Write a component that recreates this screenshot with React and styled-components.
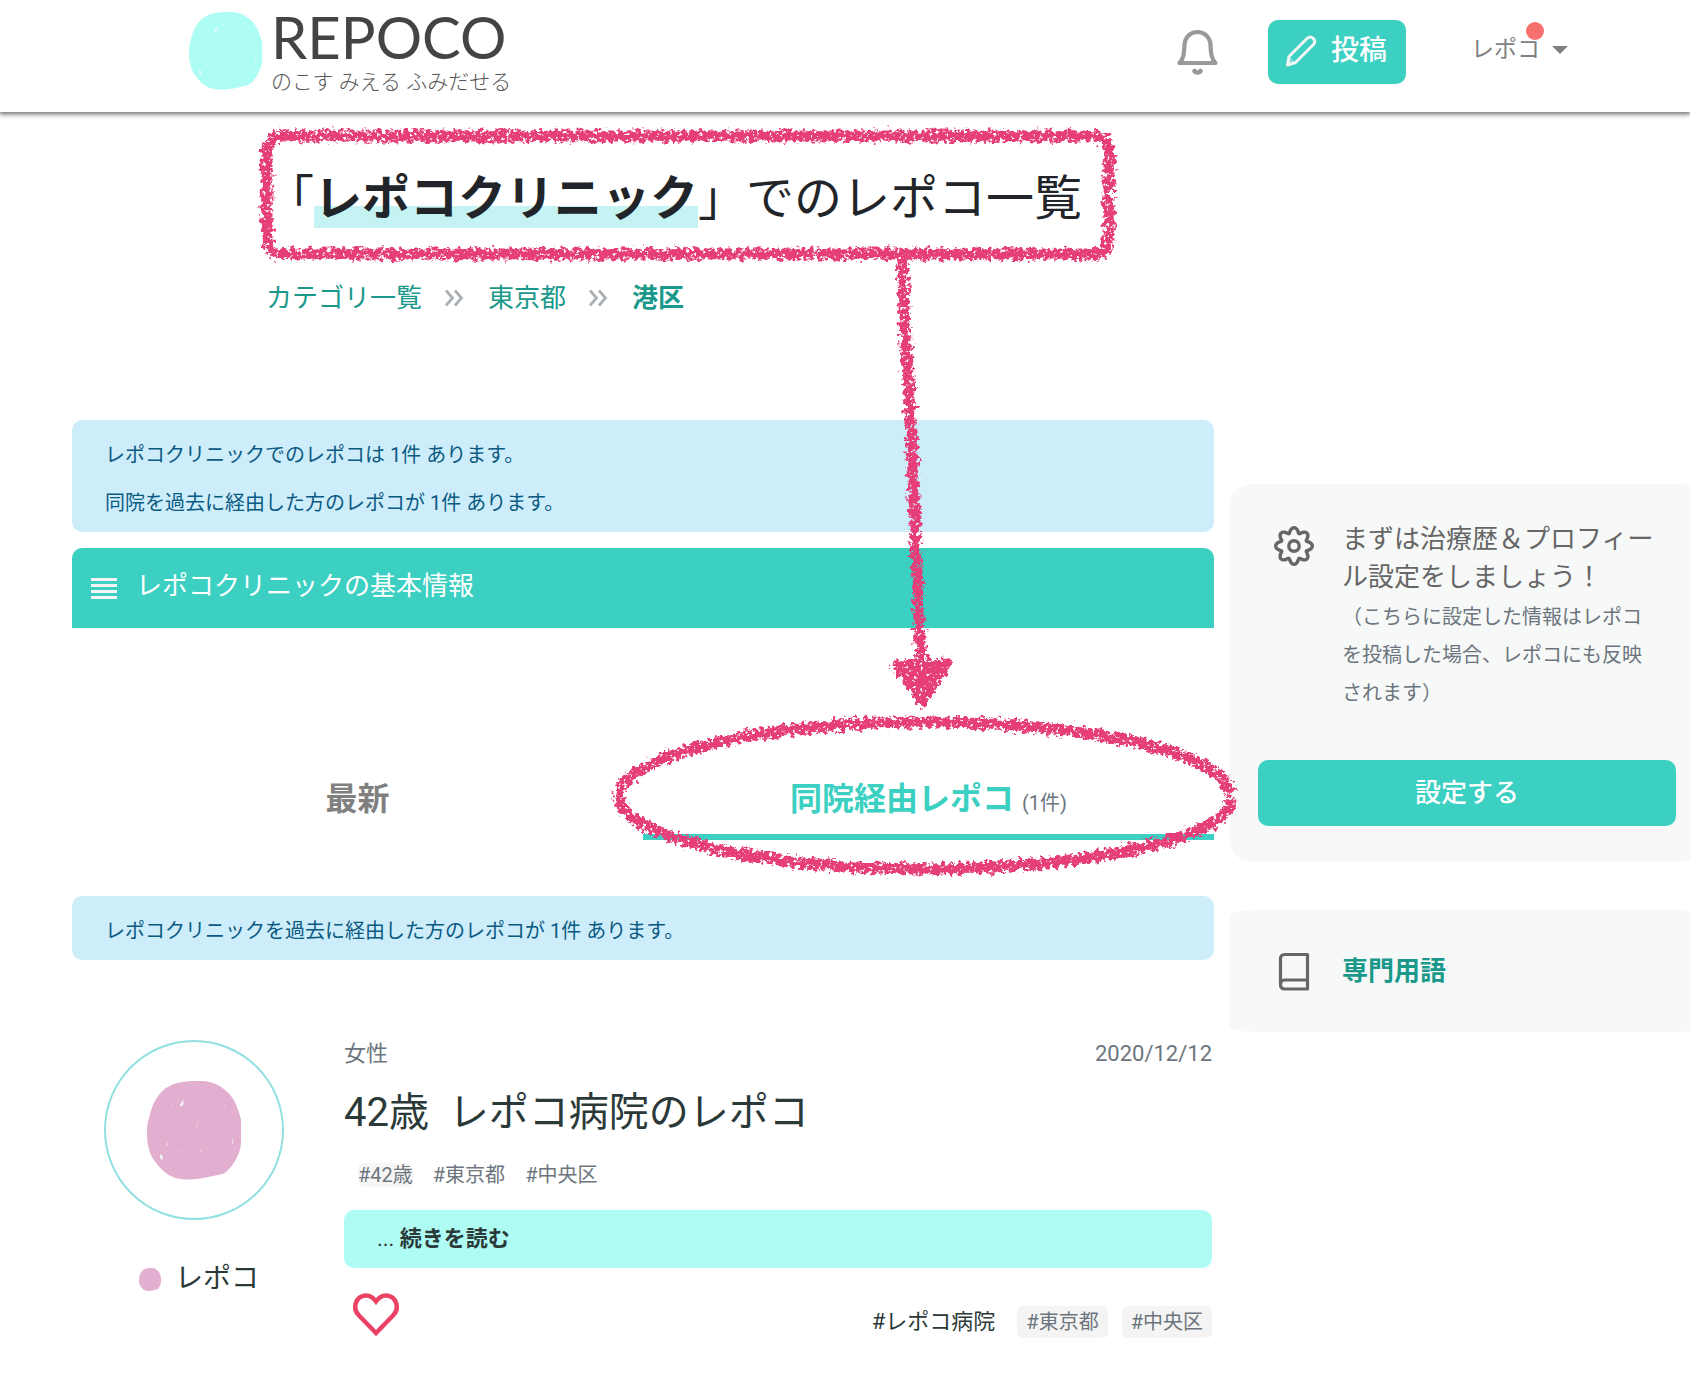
import React from "react";
import styled, { createGlobalStyle } from "styled-components";

const teal = "#3bd0c2";
const tealText = "#1a998b";
const muted = "#6c757d";
const pink = "#e53e79";

const GlobalStyle = createGlobalStyle`
  *, *::before, *::after { box-sizing: border-box; }
  body {
    margin: 0;
    background: #fff;
    color: #212529;
    font-family: Roboto, "Noto Sans CJK JP", sans-serif;
    font-size: 20px;
    line-height: 30px;
  }
  h1, h2, p, ul, ol { margin: 0; padding: 0; font-weight: 400; }
  ul, ol { list-style: none; }
  a { color: inherit; text-decoration: none; }
  button { border: 0; padding: 0; font: inherit; cursor: pointer; }
  svg { display: block; flex: none; }
`;

const Page = styled.div`
  position: relative;
  overflow: hidden;
  padding-bottom: 34px;
`;

/* ---------- header ---------- */

const Header = styled.header`
  display: flex;
  align-items: flex-start;
  justify-content: space-between;
  height: 112px;
  padding: 12px 122px 0 189px;
  background: #fff;
  box-shadow: 0 1px 5px 1px rgba(0, 0, 0, 0.6);
`;

const Brand = styled.a`
  display: flex;
  gap: 9px;
`;

const BrandText = styled.span`
  display: flex;
  flex-direction: column;
  color: #444;
`;

const BrandName = styled.span`
  font-family: Lato, sans-serif;
  font-size: 58px;
  line-height: 50px;
`;

const BrandTagline = styled.span`
  font-size: 21px;
  font-weight: 300;
  line-height: 40px;
  color: #555;
`;

const HeaderActions = styled.div`
  display: flex;
  align-items: center;
  padding-top: 8px;
`;

const IconButton = styled.button`
  margin-right: 50px;
  background: none;
  color: #999;
`;

const PostButton = styled.button`
  display: flex;
  align-items: center;
  gap: 14px;
  height: 64px;
  margin-right: 65px;
  padding: 0 19px 2px 17px;
  border-radius: 10px;
  background: ${teal};
  color: #fff;
  font-size: 28px;
  font-weight: 500;
`;

const UserMenu = styled.button`
  display: flex;
  align-items: center;
  gap: 12px;
  padding-bottom: 5px;
  background: none;
  color: #808080;
  font-size: 23px;
  line-height: 36px;
`;

const UserName = styled.span`
  position: relative;
`;

const UnreadDot = styled.span`
  position: absolute;
  top: -10px;
  right: -4px;
  width: 18px;
  height: 18px;
  border-radius: 50%;
  background: #f6716d;
`;

const Caret = styled.span`
  border: 8px solid transparent;
  border-top-color: currentColor;
  border-bottom: 0;
`;

/* ---------- page heading ---------- */

const Heading = styled.section`
  padding: 54px 266px 103px;
`;

const Title = styled.h1`
  font-size: 48px;
  line-height: 66px;
  white-space: nowrap;
`;

const Marked = styled.strong`
  display: inline-block;
  font-weight: 700;
  background: linear-gradient(transparent 40px, #c5f3f3 40px, #c5f3f3 62px, transparent 62px);
`;

const Crumbs = styled.ol`
  display: flex;
  align-items: center;
  gap: 22px;
  margin-top: 47px;
  color: ${tealText};
  font-size: 26px;
  line-height: 38px;
`;

const Crumb = styled.li`
  display: flex;
  align-items: center;
  gap: 20px;
  font-weight: ${(p) => (p.$current ? 700 : 400)};
`;

/* ---------- main column ---------- */

const Columns = styled.div`
  display: flex;
  align-items: flex-start;
  gap: 16px;
  margin-right: -14px;
  padding-left: 72px;
`;

const Main = styled.main`
  flex: 1;
  min-width: 0;
`;

const Notice = styled.div`
  display: flex;
  flex-direction: column;
  gap: 18px;
  padding: 20px 33px 14px;
  border-radius: 10px;
  background: #cdedfb;
  color: #0b5a82;
`;

const InfoToggle = styled.button`
  display: flex;
  align-items: center;
  gap: 18px;
  width: 100%;
  height: 80px;
  margin-top: 16px;
  padding: 0 18px 4px;
  border-radius: 10px 10px 0 0;
  background: ${teal};
  color: #fff;
  font-size: 26px;
  text-align: left;
`;

const Tabs = styled.div`
  display: flex;
  margin: 146px 0 56px;
`;

const Tab = styled.button`
  flex: 1;
  height: 66px;
  padding-bottom: 10px;
  border-bottom: 6px solid ${(p) => (p.$active ? teal : "transparent")};
  background: none;
  color: ${(p) => (p.$active ? teal : "#808080")};
  font-size: 32px;
  font-weight: 700;
  line-height: 48px;
`;

const TabCount = styled.span`
  color: ${muted};
  font-size: 20px;
  font-weight: 400;
  line-height: 30px;
`;

/* ---------- post ---------- */

const Post = styled.article`
  display: flex;
  gap: 60px;
  margin-top: 80px;
  padding: 0 2px 0 32px;
`;

const Author = styled.div`
  width: 180px;
  flex: none;
`;

const Avatar = styled.div`
  display: flex;
  align-items: center;
  justify-content: center;
  height: 180px;
  border: 2px solid #93e0e0;
  border-radius: 50%;
`;

const AuthorName = styled.p`
  display: flex;
  align-items: center;
  justify-content: center;
  gap: 14px;
  margin-top: 38px;
  padding-left: 10px;
  color: #2b3a38;
  font-size: 28px;
  line-height: 42px;
`;

const PostBody = styled.div`
  flex: 1;
  min-width: 0;
`;

const PostMeta = styled.div`
  display: flex;
  justify-content: space-between;
  color: ${muted};
  font-size: 22px;
  line-height: 28px;
`;

const PostTitle = styled.h2`
  margin-top: 15px;
  color: #2b3a38;
  font-size: 40px;
  line-height: 60px;
  white-space: pre;
`;

const PostTags = styled.ul`
  display: flex;
  gap: 20px;
  margin-top: 20px;
  padding-left: 14px;
  color: ${muted};
  line-height: 24px;
`;

const PostTag = styled.li`
  border-radius: 6px;
  background: ${(p) => (p.$shaded ? "#f6f6f6" : "none")};
`;

const ReadMore = styled.a`
  display: block;
  margin-top: 23px;
  padding: 0 33px;
  border-radius: 10px;
  background: #aefcf4;
  color: #2b3a38;
  font-size: 22px;
  line-height: 58px;
`;

const PostFooter = styled.div`
  display: flex;
  align-items: flex-end;
  justify-content: space-between;
  margin-top: 24px;
`;

const LikeButton = styled.button`
  padding: 0 0 0 8px;
  background: none;
  color: #ea4165;
`;

const FooterTags = styled.div`
  display: flex;
  align-items: center;
  gap: 14px;
  line-height: 32px;
`;

const HospitalTag = styled.a`
  margin-right: 8px;
  color: #2b3a38;
  font-size: 22px;
`;

const Pill = styled.a`
  padding: 0 9px;
  border-radius: 6px;
  background: #f4f4f4;
  color: ${muted};
`;

/* ---------- sidebar ---------- */

const Sidebar = styled.aside`
  display: flex;
  flex-direction: column;
  gap: 48px;
  width: 474px;
  flex: none;
  padding-top: 64px;
`;

const Card = styled.section`
  padding: 36px 28px;
  border-radius: 5%;
  background: #f7f9f9;
  color: #666;
`;

const CardRow = styled.div`
  display: flex;
  align-items: flex-start;
  gap: 28px;
  padding: 0 20px 0 16px;
`;

const CardIcon = styled.span`
  padding-top: 6px;
`;

const CardTitle = styled.p`
  font-size: 26px;
  line-height: 38px;
`;

const CardNote = styled.p`
  margin-top: 2px;
  color: ${muted};
  line-height: 38px;
`;

const CardButton = styled.button`
  width: 100%;
  height: 66px;
  margin-top: 48px;
  border-radius: 10px;
  background: ${teal};
  color: #fff;
  font-size: 26px;
  font-weight: 500;
`;

const CardLink = styled.a`
  color: ${tealText};
  font-size: 26px;
  font-weight: 700;
  line-height: 50px;
`;

/* ---------- drawings ---------- */

const Overlay = styled.svg`
  position: absolute;
  top: 0;
  left: 0;
  pointer-events: none;
`;

function Blob({ width, height, color }) {
  return (
    <svg width={width} height={height} viewBox="0 0 72 77" preserveAspectRatio="none" aria-hidden="true">
      <path
        fill={color}
        d="M17 4C24 0 33 0 42 0c8 0 15 4 20 9 6 6 8 14 10 21v17c0 7-3 13-7 19-3 4-6 7-10 7-9 2-20 5-30 3C16 75 10 68 5 61 1 55 0 47 0 40c0-8 2-13 4-20C7 13 11 7 17 4Z"
      />
      <g fill="#f3faf6" opacity="0.85">
        <path d="M28 14l-3 5 1 1 2-2zM10 57l2 1v4l-2-2zM66 44l-1 4 1 1zM16 47l-1 3h1zM40 30l-3 6 1-1zM42 53l-2 2h1zM59 18l1 1-1 0zM19 18l1 1-1 0zM24 54l1 1-1 0z" />
      </g>
    </svg>
  );
}

function BellIcon() {
  return (
    <svg width="41" height="46" viewBox="0 0 41 46" fill="none" stroke="currentColor" strokeWidth="4.200" strokeLinecap="round" strokeLinejoin="round" aria-hidden="true">
      <path d="M2.500 34H38.500C34 29 34 24 33.500 16C33 8 27.500 3 20.500 3S8 8 7.500 16C7 24 7 29 2.500 34Z" />
      <path d="M17.500 42c1 2 5 2 6 0" strokeWidth="4.600" />
    </svg>
  );
}

function PencilIcon() {
  return (
    <svg width="32" height="32" viewBox="0 0 32 32" fill="none" stroke="#f4f6f5" strokeWidth="3" strokeLinejoin="round" aria-hidden="true">
      <path d="M2.500 30L4 21.500 22 3.500C26.500-.5 32 5 28.500 9.500L10.500 27.500Z" />
      <path d="M4 21.500L10.500 27.500 2.500 30Z" fill="#f4f6f5" stroke="none" opacity="0.4" />
    </svg>
  );
}

const gearOutline =
  Array.from({ length: 160 }, (_, i) => {
    const t = (i / 160) * Math.PI * 2;
    const r = 15.8 + 2.5 * Math.cos(8 * t);
    const a = t + 0.04 * Math.sin(8 * t);
    return `${i ? "L" : "M"}${(20 + r * Math.cos(a)).toFixed(2)} ${(20 + r * Math.sin(a)).toFixed(2)}`;
  }).join("") + "Z";

function GearIcon() {
  return (
    <svg width="40" height="40" viewBox="0 0 40 40" fill="none" stroke="currentColor" strokeWidth="3.400" strokeLinejoin="round" aria-hidden="true">
      <path d={gearOutline} />
      <circle cx="20" cy="20" r="5.200" />
    </svg>
  );
}

function BookIcon() {
  return (
    <svg width="40" height="40" viewBox="0 0 40 40" fill="none" stroke="currentColor" strokeWidth="3.200" strokeLinejoin="round" aria-hidden="true">
      <path d="M6.500 32.500V6.500a4 4 0 0 1 4-4h23v34.500h-23a4 4 0 0 1-4-4.500a4 4 0 0 1 4-4.500h23" />
    </svg>
  );
}

function ChevronsIcon() {
  return (
    <svg width="24" height="24" viewBox="0 0 24 24" fill="none" stroke="#abb0b5" strokeWidth="2.800" aria-hidden="true">
      <path d="M4 4.500l6.500 7.500L4 19.500M13 4.500l6.500 7.500-6.500 7.500" />
    </svg>
  );
}

function LinesIcon() {
  return (
    <svg width="28" height="28" viewBox="0 0 28 28" fill="none" stroke="#f4f6f5" strokeWidth="3" aria-hidden="true">
      <path d="M1 7.500h26M1 13.500h26M1 19.500h26M1 25.500h26" />
    </svg>
  );
}

function HeartIcon() {
  return (
    <svg width="48" height="46" viewBox="0 0 48 46" fill="none" stroke="currentColor" strokeWidth="4.400" aria-hidden="true">
      <path d="M24 41L6.500 23C.5 16.500 3 4.500 13.500 3.500 18.500 3.200 21.500 6 24 9.500 26.500 6 29.500 3.200 34.500 3.500 45 4.500 47.500 16.500 41.500 23Z" />
    </svg>
  );
}

function CrayonMarks() {
  return (
    <Overlay width="1260" height="900" viewBox="0 0 1260 900" fill="none" aria-hidden="true">
      <defs>
        <filter id="crayon" filterUnits="userSpaceOnUse" x="240" y="110" width="1020" height="790" colorInterpolationFilters="sRGB">
          <feTurbulence type="fractalNoise" baseFrequency="0.22" numOctaves="3" seed="4" result="grain" />
          <feDisplacementMap in="SourceGraphic" in2="grain" scale="13" xChannelSelector="R" yChannelSelector="G" result="rough" />
          <feTurbulence type="fractalNoise" baseFrequency="0.3" numOctaves="2" seed="11" />
          <feColorMatrix values="0 0 0 0 0  0 0 0 0 0  0 0 0 0 0  0 8 0 0 -2" result="holes" />
          <feComposite in="rough" in2="holes" operator="in" />
        </filter>
      </defs>
      <g filter="url(#crayon)" stroke={pink} strokeWidth="11">
        <path d="M1109 192V154Q1109 136 1093 136H284Q267 136 267 153V238Q267 254 284 254H1092Q1109 254 1109 237V195" />
        <path d="M902 256C904 320 909 390 912 450S918 590 921 665" />
        <path d="M895 664L949 662 923 705Z" fill={pink} strokeWidth="7" strokeLinejoin="round" />
        <path d="M1230 795C1228 754 1090 722 924 722S620 757 619 796 758 869 922 869 1232 838 1231 799" />
      </g>
    </Overlay>
  );
}

/* ---------- page ---------- */

export default function App() {
  return (
    <Page>
      <GlobalStyle />
      <Header>
        <Brand href="#top">
          <Blob width={73} height={78} color="#adfdf5" />
          <BrandText>
            <BrandName>REPOCO</BrandName>
            <BrandTagline>のこす みえる ふみだせる</BrandTagline>
          </BrandText>
        </Brand>
        <HeaderActions>
          <IconButton type="button" aria-label="お知らせ">
            <BellIcon />
          </IconButton>
          <PostButton type="button">
            <PencilIcon />
            投稿
          </PostButton>
          <UserMenu type="button">
            <UserName>
              レポコ
              <UnreadDot />
            </UserName>
            <Caret />
          </UserMenu>
        </HeaderActions>
      </Header>

      <Heading>
        <Title>
          「<Marked>レポコクリニック</Marked>」でのレポコ一覧
        </Title>
        <Crumbs>
          <Crumb>
            <a href="#categories">カテゴリ一覧</a>
            <ChevronsIcon />
          </Crumb>
          <Crumb>
            <a href="#tokyo">東京都</a>
            <ChevronsIcon />
          </Crumb>
          <Crumb $current>
            <a href="#minato">港区</a>
          </Crumb>
        </Crumbs>
      </Heading>

      <Columns>
        <Main>
          <Notice>
            <p>レポコクリニックでのレポコは 1件 あります。</p>
            <p>同院を過去に経由した方のレポコが 1件 あります。</p>
          </Notice>
          <InfoToggle type="button">
            <LinesIcon />
            レポコクリニックの基本情報
          </InfoToggle>

          <Tabs role="tablist">
            <Tab type="button" role="tab" aria-selected="false">
              最新
            </Tab>
            <Tab type="button" role="tab" aria-selected="true" $active>
              同院経由レポコ <TabCount>(1件)</TabCount>
            </Tab>
          </Tabs>

          <Notice>
            <p>レポコクリニックを過去に経由した方のレポコが 1件 あります。</p>
          </Notice>

          <Post>
            <Author>
              <Avatar>
                <Blob width={94} height={99} color="#e3afd0" />
              </Avatar>
              <AuthorName>
                <Blob width={22} height={23} color="#e3afd0" />
                レポコ
              </AuthorName>
            </Author>
            <PostBody>
              <PostMeta>
                <span>女性</span>
                <time dateTime="2020-12-12">2020/12/12</time>
              </PostMeta>
              <PostTitle>42歳{"  "}レポコ病院のレポコ</PostTitle>
              <PostTags>
                <PostTag $shaded>#42歳</PostTag>
                <PostTag>#東京都</PostTag>
                <PostTag>#中央区</PostTag>
              </PostTags>
              <ReadMore href="#post">
                ... <strong>続きを読む</strong>
              </ReadMore>
              <PostFooter>
                <LikeButton type="button" aria-label="いいね">
                  <HeartIcon />
                </LikeButton>
                <FooterTags>
                  <HospitalTag href="#hospital">#レポコ病院</HospitalTag>
                  <Pill href="#tokyo">#東京都</Pill>
                  <Pill href="#chuo">#中央区</Pill>
                </FooterTags>
              </PostFooter>
            </PostBody>
          </Post>
        </Main>

        <Sidebar>
          <Card>
            <CardRow>
              <CardIcon>
                <GearIcon />
              </CardIcon>
              <div>
                <CardTitle>まずは治療歴＆プロフィール設定をしましょう！</CardTitle>
                <CardNote>（こちらに設定した情報はレポコを投稿した場合、レポコにも反映されます）</CardNote>
              </div>
            </CardRow>
            <CardButton type="button">設定する</CardButton>
          </Card>
          <Card>
            <CardRow>
              <CardIcon>
                <BookIcon />
              </CardIcon>
              <CardLink href="#terms">専門用語</CardLink>
            </CardRow>
          </Card>
        </Sidebar>
      </Columns>
      <CrayonMarks />
    </Page>
  );
}
